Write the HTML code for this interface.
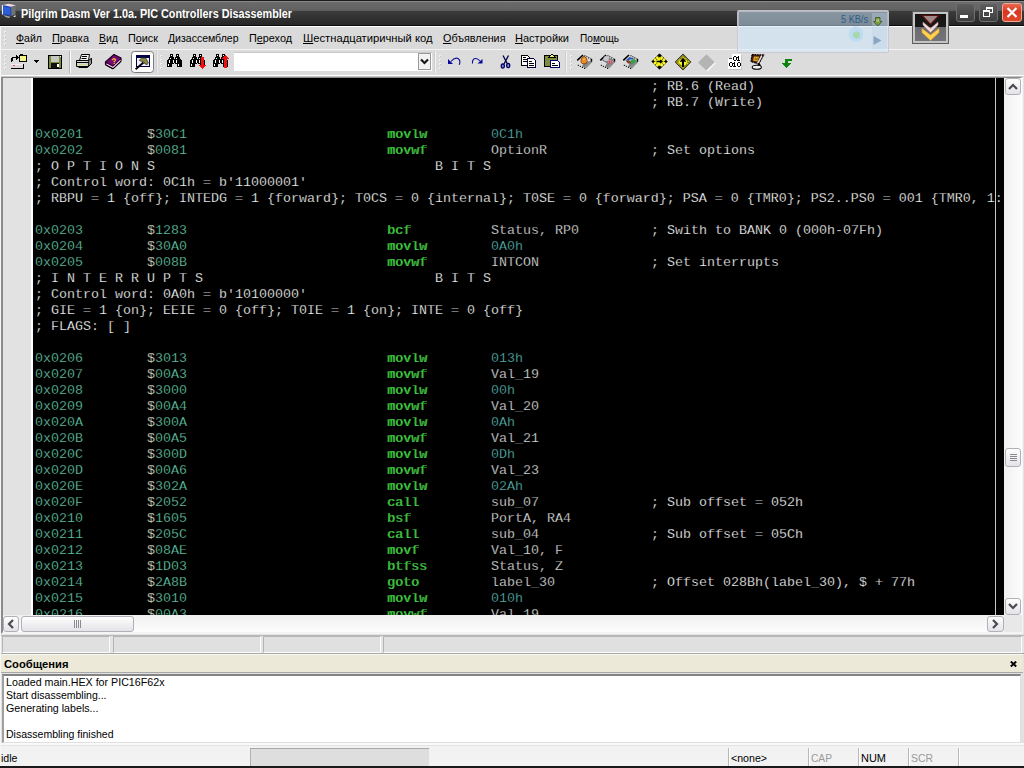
<!DOCTYPE html>
<html><head><meta charset="utf-8">
<style>
html,body{margin:0;padding:0;}
body{width:1024px;height:768px;overflow:hidden;position:relative;background:#e2e2e2;font-family:"Liberation Sans",sans-serif;font-size:11px;color:#000;}
div,span{position:absolute;box-sizing:border-box;}
#title{left:0;top:0;width:1024px;height:26px;background:linear-gradient(to bottom,#1a1a1a 0,#1a1a1a 1px,#888 1px,#888 2px,#6a6a6a 2px,#646464 9px,#585858 11px,#3c3c3c 11px,#262626 25px,#0a0a0a 25px,#0a0a0a 26px);}
#title .t{left:21px;top:5px;color:#fff;font-weight:bold;font-size:12.5px;white-space:nowrap;letter-spacing:0.1px;}
#menu{left:0;top:26px;width:1024px;height:23px;background:#dadada;border-top:1px solid #fff;}
#menu span{top:5px;font-size:11.5px;white-space:nowrap;}
#menu u{text-decoration:underline;}
#tb{left:0;top:49px;width:1024px;height:27px;background:#dcdcdc;border-top:1px solid #f4f4f4;border-bottom:1px solid #fff;}
.sep{top:4px;width:2px;height:20px;border-left:1px solid #a8a8a8;border-right:1px solid #fff;}
#ed{left:1px;top:76px;width:1022px;height:558px;border:2px solid #8a8a8a;border-right-color:#f4f4f4;border-bottom-color:#f4f4f4;background:#fff;}
#gut{left:0;top:0;width:28px;height:537px;background:#e2e2e2;}
#code{left:30px;top:0;width:971px;height:537px;background:#000;overflow:hidden;font-family:"Liberation Mono",monospace;font-size:13.333px;line-height:16px;}
#code span{white-space:pre;height:16px;-webkit-text-stroke:0.25px #000;}
#code .a{color:#66cdaa;}
#code .s{color:#f0f0d8;}
#code .m{color:#50f050;text-shadow:0.5px 0 0 #50f050;}
#code .n{color:#5ab8b4;}
#code .d{color:#e4e4e4;}
#code .c{color:#fff;}
#edge{left:962px;top:0;width:1px;height:537px;background:#c8c8c8;}
#vs{left:1001px;top:0;width:18px;height:537px;background:linear-gradient(to right,#f0f0f0,#fdfdfd);}
#hs{left:0;top:537px;width:1001px;height:17px;background:linear-gradient(#f0f0f0,#fdfdfd);}
.sbtn{width:17px;height:17px;border:1px solid #b0b0b8;border-radius:3px;background:linear-gradient(#fdfdfd,#e4e4e8);}
#panels{left:0;top:635px;width:1024px;height:19px;background:#e4e4e4;border-top:1px solid #b8b8b8;border-bottom:1px solid #a8a8a8;}
#panels div{top:0px;height:17px;border:1px solid #fcfcfc;border-top-color:#b4b4b4;border-left-color:#b4b4b4;background:#e0e0e0;}
#mh{left:0;top:654px;width:1023px;height:19px;background:#ece9d8;border-top:1px solid #f8f8f4;border-bottom:1px solid #a8a8a8;}
#mh .t{left:3px;top:3px;font-weight:bold;font-size:11.5px;}
#mb{left:2px;top:674px;width:1019px;height:69px;background:#fff;border:2px solid #848484;border-left-color:#a0a0a0;border-right:1px solid #e0e0e0;border-bottom:1px solid #e0e0e0;}
#mb span{left:3px;font-size:11px;white-space:nowrap;}
#sb{left:0;top:745px;width:1024px;height:21px;background:#f2f2f2;border-top:1px solid #e4e4e4;}
.ss{top:2px;width:2px;height:19px;border-left:1px solid #b8b8b8;border-right:1px solid #fff;}
#sb span{top:4px;font-size:11.5px;}
#bot{left:0;top:766px;width:1024px;height:2px;background:#1a1a1a;}
</style></head><body>
<div id="title"><svg style="position:absolute;left:0;top:0" width="20" height="22">
<path d="M2 5 L11 6.500 L11 16 L2 14.500Z" fill="#2448c8"/>
<path d="M4 7 L10 8 L10 14.500 L4 13.500Z" fill="#2c60d8"/>
<path d="M2.500 5 V14.500" stroke="#e8eefc" stroke-width="1.200"/>
<path d="M3 5 L8.500 3.800 L16 5.200 L11 6.800Z" fill="#f0dce4"/>
<path d="M11.300 7 L15.500 5.800 L15.500 14.500 L11.300 16Z" fill="#6c7474"/>
<path d="M3 15 L10.500 16.800 L9 18 L6 17.200Z" fill="#98a8a0"/>
<path d="M13 16.800 L15.500 15 L15.500 17 Z" fill="#f4f4f4"/>
</svg>
<span style="left:20.5px;top:7px;font-size:12px;font-weight:bold;color:#fff;white-space:pre;transform-origin:0 0;transform:scaleX(0.9009)">Pilgrim Dasm Ver 1.0a. PIC Controllers Disassembler</span></div>
<div id="menu">
<svg style="position:absolute;left:0;top:0" width="10" height="23" shape-rendering="crispEdges"><g fill="#f4f4f4"><rect x="4" y="4" width="2" height="2"/><rect x="4" y="8" width="2" height="2"/><rect x="4" y="12" width="2" height="2"/><rect x="4" y="16" width="2" height="2"/></g><g fill="#c4c4c4"><rect x="5" y="5" width="1" height="1"/><rect x="5" y="9" width="1" height="1"/><rect x="5" y="13" width="1" height="1"/><rect x="5" y="17" width="1" height="1"/></g></svg>
<span style="left:15.5px;top:5px;font-size:11px;font-weight:normal;color:#000;white-space:pre;transform-origin:0 0;transform:scaleX(0.9613)"><u>Ф</u>айл</span>
<span style="left:51.5px;top:5px;font-size:11px;font-weight:normal;color:#000;white-space:pre;transform-origin:0 0;transform:scaleX(0.9954)"><u>П</u>равка</span>
<span style="left:98.5px;top:5px;font-size:11px;font-weight:normal;color:#000;white-space:pre;transform-origin:0 0;transform:scaleX(0.9545)"><u>В</u>ид</span>
<span style="left:127.5px;top:5px;font-size:11px;font-weight:normal;color:#000;white-space:pre;transform-origin:0 0;transform:scaleX(0.9841)">П<u>о</u>иск</span>
<span style="left:168px;top:5px;font-size:11px;font-weight:normal;color:#000;white-space:pre;transform-origin:0 0;transform:scaleX(0.9555)"><u>Д</u>изассемблер</span>
<span style="left:248.5px;top:5px;font-size:11px;font-weight:normal;color:#000;white-space:pre;transform-origin:0 0;transform:scaleX(0.9839)">П<u>е</u>реход</span>
<span style="left:302.5px;top:5px;font-size:11px;font-weight:normal;color:#000;white-space:pre;transform-origin:0 0;transform:scaleX(1.0187)"><u>Ш</u>естнадцатиричный код</span>
<span style="left:442.5px;top:5px;font-size:11px;font-weight:normal;color:#000;white-space:pre;transform-origin:0 0;transform:scaleX(0.9821)"><u>О</u>бъявления</span>
<span style="left:514.5px;top:5px;font-size:11px;font-weight:normal;color:#000;white-space:pre;transform-origin:0 0;transform:scaleX(1.0012)"><u>Н</u>астройки</span>
<span style="left:579.5px;top:5px;font-size:11px;font-weight:normal;color:#000;white-space:pre;transform-origin:0 0;transform:scaleX(0.9176)">По<u>м</u>ощь</span>
</div>
<div id="tb">
<svg style="position:absolute;left:0;top:-1px" width="1024" height="28" viewBox="0 49 1024 28" shape-rendering="crispEdges">
<!-- grips -->
<g fill="#f2f2f2">
<rect x="4" y="55" width="2" height="2"/><rect x="4" y="59" width="2" height="2"/><rect x="4" y="63" width="2" height="2"/><rect x="4" y="67" width="2" height="2"/>
<rect x="160" y="55" width="2" height="2"/><rect x="160" y="59" width="2" height="2"/><rect x="160" y="63" width="2" height="2"/><rect x="160" y="67" width="2" height="2"/>
<rect x="439" y="55" width="2" height="2"/><rect x="439" y="59" width="2" height="2"/><rect x="439" y="63" width="2" height="2"/><rect x="439" y="67" width="2" height="2"/>
<rect x="570" y="55" width="2" height="2"/><rect x="570" y="59" width="2" height="2"/><rect x="570" y="63" width="2" height="2"/><rect x="570" y="67" width="2" height="2"/>
</g>
<g fill="#c4c4c4">
<rect x="5" y="56" width="1" height="1"/><rect x="5" y="60" width="1" height="1"/><rect x="5" y="64" width="1" height="1"/><rect x="5" y="68" width="1" height="1"/>
<rect x="161" y="56" width="1" height="1"/><rect x="161" y="60" width="1" height="1"/><rect x="161" y="64" width="1" height="1"/><rect x="161" y="68" width="1" height="1"/>
<rect x="440" y="56" width="1" height="1"/><rect x="440" y="60" width="1" height="1"/><rect x="440" y="64" width="1" height="1"/><rect x="440" y="68" width="1" height="1"/>
<rect x="571" y="56" width="1" height="1"/><rect x="571" y="60" width="1" height="1"/><rect x="571" y="64" width="1" height="1"/><rect x="571" y="68" width="1" height="1"/>
</g>
<!-- separators -->
<rect x="69" y="51" width="1" height="22" fill="#b4b4b4"/><rect x="70" y="51" width="1" height="22" fill="#fff"/>
<rect x="156" y="51" width="1" height="22" fill="#d0d0d0"/><rect x="157" y="51" width="1" height="22" fill="#ececec"/>
<rect x="434" y="51" width="1" height="22" fill="#cccccc"/><rect x="435" y="51" width="1" height="22" fill="#f4f4f4"/>
<rect x="565" y="51" width="1" height="22" fill="#cccccc"/><rect x="566" y="51" width="1" height="22" fill="#f4f4f4"/>
<!-- open icon -->
<path d="M11 62V58h1v-1h4v-2h1v1h1v1h1v1h-1v1h-1v1h-1v-2h-3v3z" fill="#000"/>
<rect x="19" y="55" width="8" height="7" fill="#000"/><rect x="20" y="54" width="3" height="1" fill="#000"/>
<rect x="20" y="56" width="6" height="5" fill="#f4f488"/>
<rect x="11" y="64" width="13" height="5" fill="#000"/><rect x="11" y="64" width="12" height="4" fill="#dcd4d8"/><rect x="11" y="64" width="12" height="1" fill="#f8f0f0"/><rect x="13" y="65" width="2" height="1" fill="#e05070"/>
<!-- drop arrow -->
<path d="M34 60h5v1h-1v1h-1v1h-1v-1h-1v-1h-1z" fill="#000"/>
<!-- floppy -->
<rect x="48" y="55" width="14" height="14" fill="#000"/>
<rect x="49" y="56" width="12" height="12" fill="#7d8c3c"/>
<rect x="51" y="56" width="8" height="6" fill="#c4c8c0"/>
<rect x="51" y="63" width="8" height="5" fill="#101010"/>
<rect x="57" y="64" width="2" height="3" fill="#fff"/>
<rect x="60" y="56" width="1" height="1" fill="#fff"/>
<!-- printer -->
<g shape-rendering="auto">
<path d="M79.500 60.500 L81.500 54.500 H89.500 L88.500 60.500" fill="#f4f4f4" stroke="#000"/>
<path d="M82 56.500h5M81.500 58.500h5" stroke="#000"/>
<path d="M76.500 60.500H88.500L91.500 58.500V63.500L88.500 66.500H76.500Z" fill="#d8d8d8" stroke="#000"/>
<path d="M88.500 60.500 L91.500 58.500 V63.500 L88.500 66.500Z" fill="#888" stroke="#000" stroke-width="0.800"/>
<path d="M76.500 62.500H88.500" stroke="#000"/>
<path d="M77 64.500H88" stroke="#d4d48c"/>
<path d="M78.500 67.500H87.500L90.500 64.500" stroke="#000" fill="none"/>
</g>
<!-- help book -->
<g shape-rendering="auto">
<path d="M105.500 62 L114 54.500 L121 58 L121 61 L113 68.500 L105.500 64.500Z" fill="#760876" stroke="#1c001c" stroke-width="1.200" stroke-linejoin="round"/>
<path d="M106.500 64 L113 67.300 L120.500 60.300" stroke="#e8d8ec" stroke-width="1.100" fill="none"/>
<path d="M105.500 62 L113 66 L121 58" stroke="#30002c" stroke-width="1" fill="none"/>
<path d="M105.500 65 L113 69 L121 61.500" stroke="#000" stroke-width="1" fill="none"/>
<text x="111.500" y="64" font-family="Liberation Sans" font-weight="bold" font-size="8" fill="#ffd020" transform="rotate(-8 114 61)">?</text>
</g>
<!-- pressed button -->
<rect x="131.500" y="51.500" width="22" height="21" rx="3" ry="3" fill="#fff" stroke="#7c7c7c" shape-rendering="auto"/>
<rect x="136" y="55" width="14" height="12" fill="#000048"/>
<rect x="137" y="58" width="12" height="8" fill="#f0f0fc"/>
<g shape-rendering="auto">
<path d="M139.300 60.300 L141.800 57.900 L145.600 58 L148.300 62.500 L147.200 64.600 L145 64 L143.600 61.600 L141 61.200Z" fill="#8c8c44" stroke="#2c2c10" stroke-width="0.700"/>
<path d="M143.500 62.500 L135.600 69.200" stroke="#000" stroke-width="1.900"/>
</g>
<!-- binoculars x3 -->
<rect x="170" y="54" width="3" height="1" fill="#000"/><rect x="176" y="54" width="3" height="1" fill="#000"/><rect x="170" y="55" width="1" height="1" fill="#000"/><rect x="171" y="55" width="1" height="1" fill="#fff"/><rect x="172" y="55" width="1" height="1" fill="#000"/><rect x="176" y="55" width="1" height="1" fill="#000"/><rect x="177" y="55" width="1" height="1" fill="#fff"/><rect x="178" y="55" width="1" height="1" fill="#000"/><rect x="170" y="56" width="3" height="1" fill="#000"/><rect x="176" y="56" width="3" height="1" fill="#000"/><rect x="169" y="57" width="5" height="1" fill="#000"/><rect x="175" y="57" width="5" height="1" fill="#000"/><rect x="169" y="58" width="1" height="1" fill="#000"/><rect x="170" y="58" width="1" height="1" fill="#fff"/><rect x="171" y="58" width="3" height="1" fill="#000"/><rect x="175" y="58" width="1" height="1" fill="#000"/><rect x="176" y="58" width="1" height="1" fill="#fff"/><rect x="177" y="58" width="3" height="1" fill="#000"/><rect x="168" y="59" width="13" height="1" fill="#000"/><rect x="167" y="60" width="2" height="1" fill="#000"/><rect x="169" y="60" width="1" height="1" fill="#fff"/><rect x="170" y="60" width="3" height="1" fill="#000"/><rect x="173" y="60" width="1" height="1" fill="#fff"/><rect x="174" y="60" width="2" height="1" fill="#000"/><rect x="176" y="60" width="1" height="1" fill="#fff"/><rect x="177" y="60" width="5" height="1" fill="#000"/><rect x="167" y="61" width="2" height="1" fill="#000"/><rect x="169" y="61" width="1" height="1" fill="#fff"/><rect x="170" y="61" width="3" height="1" fill="#000"/><rect x="173" y="61" width="1" height="1" fill="#fff"/><rect x="174" y="61" width="2" height="1" fill="#000"/><rect x="176" y="61" width="1" height="1" fill="#fff"/><rect x="177" y="61" width="5" height="1" fill="#000"/><rect x="167" y="62" width="2" height="1" fill="#000"/><rect x="169" y="62" width="1" height="1" fill="#fff"/><rect x="170" y="62" width="3" height="1" fill="#000"/><rect x="173" y="62" width="1" height="1" fill="#fff"/><rect x="174" y="62" width="2" height="1" fill="#000"/><rect x="176" y="62" width="1" height="1" fill="#fff"/><rect x="177" y="62" width="5" height="1" fill="#000"/><rect x="167" y="63" width="7" height="1" fill="#000"/><rect x="175" y="63" width="7" height="1" fill="#000"/><rect x="167" y="64" width="1" height="1" fill="#000"/><rect x="168" y="64" width="1" height="1" fill="#fff"/><rect x="169" y="64" width="3" height="1" fill="#000"/><rect x="177" y="64" width="1" height="1" fill="#000"/><rect x="178" y="64" width="1" height="1" fill="#fff"/><rect x="179" y="64" width="3" height="1" fill="#000"/><rect x="167" y="65" width="1" height="1" fill="#000"/><rect x="168" y="65" width="1" height="1" fill="#fff"/><rect x="169" y="65" width="3" height="1" fill="#000"/><rect x="177" y="65" width="1" height="1" fill="#000"/><rect x="178" y="65" width="1" height="1" fill="#fff"/><rect x="179" y="65" width="3" height="1" fill="#000"/><rect x="167" y="66" width="5" height="1" fill="#000"/><rect x="177" y="66" width="5" height="1" fill="#000"/><rect x="193" y="54" width="3" height="1" fill="#000"/><rect x="199" y="54" width="3" height="1" fill="#000"/><rect x="193" y="55" width="1" height="1" fill="#000"/><rect x="194" y="55" width="1" height="1" fill="#fff"/><rect x="195" y="55" width="1" height="1" fill="#000"/><rect x="199" y="55" width="1" height="1" fill="#000"/><rect x="200" y="55" width="1" height="1" fill="#fff"/><rect x="201" y="55" width="1" height="1" fill="#000"/><rect x="193" y="56" width="3" height="1" fill="#000"/><rect x="199" y="56" width="3" height="1" fill="#000"/><rect x="192" y="57" width="5" height="1" fill="#000"/><rect x="198" y="57" width="5" height="1" fill="#000"/><rect x="192" y="58" width="1" height="1" fill="#000"/><rect x="193" y="58" width="1" height="1" fill="#fff"/><rect x="194" y="58" width="3" height="1" fill="#000"/><rect x="198" y="58" width="1" height="1" fill="#000"/><rect x="199" y="58" width="1" height="1" fill="#fff"/><rect x="200" y="58" width="3" height="1" fill="#000"/><rect x="191" y="59" width="13" height="1" fill="#000"/><rect x="190" y="60" width="2" height="1" fill="#000"/><rect x="192" y="60" width="1" height="1" fill="#fff"/><rect x="193" y="60" width="3" height="1" fill="#000"/><rect x="196" y="60" width="1" height="1" fill="#fff"/><rect x="197" y="60" width="2" height="1" fill="#000"/><rect x="199" y="60" width="1" height="1" fill="#fff"/><rect x="200" y="60" width="5" height="1" fill="#000"/><rect x="190" y="61" width="2" height="1" fill="#000"/><rect x="192" y="61" width="1" height="1" fill="#fff"/><rect x="193" y="61" width="3" height="1" fill="#000"/><rect x="196" y="61" width="1" height="1" fill="#fff"/><rect x="197" y="61" width="2" height="1" fill="#000"/><rect x="199" y="61" width="1" height="1" fill="#fff"/><rect x="200" y="61" width="5" height="1" fill="#000"/><rect x="190" y="62" width="2" height="1" fill="#000"/><rect x="192" y="62" width="1" height="1" fill="#fff"/><rect x="193" y="62" width="3" height="1" fill="#000"/><rect x="196" y="62" width="1" height="1" fill="#fff"/><rect x="197" y="62" width="2" height="1" fill="#000"/><rect x="199" y="62" width="1" height="1" fill="#fff"/><rect x="200" y="62" width="5" height="1" fill="#000"/><rect x="190" y="63" width="7" height="1" fill="#000"/><rect x="198" y="63" width="7" height="1" fill="#000"/><rect x="190" y="64" width="1" height="1" fill="#000"/><rect x="191" y="64" width="1" height="1" fill="#fff"/><rect x="192" y="64" width="3" height="1" fill="#000"/><rect x="200" y="64" width="1" height="1" fill="#000"/><rect x="201" y="64" width="1" height="1" fill="#fff"/><rect x="202" y="64" width="3" height="1" fill="#000"/><rect x="190" y="65" width="1" height="1" fill="#000"/><rect x="191" y="65" width="1" height="1" fill="#fff"/><rect x="192" y="65" width="3" height="1" fill="#000"/><rect x="200" y="65" width="1" height="1" fill="#000"/><rect x="201" y="65" width="1" height="1" fill="#fff"/><rect x="202" y="65" width="3" height="1" fill="#000"/><rect x="190" y="66" width="5" height="1" fill="#000"/><rect x="200" y="66" width="5" height="1" fill="#000"/><rect x="216" y="54" width="3" height="1" fill="#000"/><rect x="222" y="54" width="3" height="1" fill="#000"/><rect x="216" y="55" width="1" height="1" fill="#000"/><rect x="217" y="55" width="1" height="1" fill="#fff"/><rect x="218" y="55" width="1" height="1" fill="#000"/><rect x="222" y="55" width="1" height="1" fill="#000"/><rect x="223" y="55" width="1" height="1" fill="#fff"/><rect x="224" y="55" width="1" height="1" fill="#000"/><rect x="216" y="56" width="3" height="1" fill="#000"/><rect x="222" y="56" width="3" height="1" fill="#000"/><rect x="215" y="57" width="5" height="1" fill="#000"/><rect x="221" y="57" width="5" height="1" fill="#000"/><rect x="215" y="58" width="1" height="1" fill="#000"/><rect x="216" y="58" width="1" height="1" fill="#fff"/><rect x="217" y="58" width="3" height="1" fill="#000"/><rect x="221" y="58" width="1" height="1" fill="#000"/><rect x="222" y="58" width="1" height="1" fill="#fff"/><rect x="223" y="58" width="3" height="1" fill="#000"/><rect x="214" y="59" width="13" height="1" fill="#000"/><rect x="213" y="60" width="2" height="1" fill="#000"/><rect x="215" y="60" width="1" height="1" fill="#fff"/><rect x="216" y="60" width="3" height="1" fill="#000"/><rect x="219" y="60" width="1" height="1" fill="#fff"/><rect x="220" y="60" width="2" height="1" fill="#000"/><rect x="222" y="60" width="1" height="1" fill="#fff"/><rect x="223" y="60" width="5" height="1" fill="#000"/><rect x="213" y="61" width="2" height="1" fill="#000"/><rect x="215" y="61" width="1" height="1" fill="#fff"/><rect x="216" y="61" width="3" height="1" fill="#000"/><rect x="219" y="61" width="1" height="1" fill="#fff"/><rect x="220" y="61" width="2" height="1" fill="#000"/><rect x="222" y="61" width="1" height="1" fill="#fff"/><rect x="223" y="61" width="5" height="1" fill="#000"/><rect x="213" y="62" width="2" height="1" fill="#000"/><rect x="215" y="62" width="1" height="1" fill="#fff"/><rect x="216" y="62" width="3" height="1" fill="#000"/><rect x="219" y="62" width="1" height="1" fill="#fff"/><rect x="220" y="62" width="2" height="1" fill="#000"/><rect x="222" y="62" width="1" height="1" fill="#fff"/><rect x="223" y="62" width="5" height="1" fill="#000"/><rect x="213" y="63" width="7" height="1" fill="#000"/><rect x="221" y="63" width="7" height="1" fill="#000"/><rect x="213" y="64" width="1" height="1" fill="#000"/><rect x="214" y="64" width="1" height="1" fill="#fff"/><rect x="215" y="64" width="3" height="1" fill="#000"/><rect x="223" y="64" width="1" height="1" fill="#000"/><rect x="224" y="64" width="1" height="1" fill="#fff"/><rect x="225" y="64" width="3" height="1" fill="#000"/><rect x="213" y="65" width="1" height="1" fill="#000"/><rect x="214" y="65" width="1" height="1" fill="#fff"/><rect x="215" y="65" width="3" height="1" fill="#000"/><rect x="223" y="65" width="1" height="1" fill="#000"/><rect x="224" y="65" width="1" height="1" fill="#fff"/><rect x="225" y="65" width="3" height="1" fill="#000"/><rect x="213" y="66" width="5" height="1" fill="#000"/><rect x="223" y="66" width="5" height="1" fill="#000"/><rect x="201" y="57" width="3" height="1" fill="#f01010"/><rect x="201" y="58" width="3" height="1" fill="#f01010"/><rect x="201" y="59" width="3" height="1" fill="#f01010"/><rect x="201" y="60" width="3" height="1" fill="#f01010"/><rect x="201" y="61" width="3" height="1" fill="#f01010"/><rect x="201" y="62" width="3" height="1" fill="#f01010"/><rect x="201" y="63" width="3" height="1" fill="#f01010"/><rect x="201" y="64" width="3" height="1" fill="#f01010"/><rect x="199" y="65" width="7" height="1" fill="#f01010"/><rect x="200" y="66" width="5" height="1" fill="#f01010"/><rect x="201" y="67" width="3" height="1" fill="#f01010"/><rect x="202" y="68" width="1" height="1" fill="#f01010"/><rect x="225" y="55" width="1" height="1" fill="#f01010"/><rect x="224" y="56" width="3" height="1" fill="#f01010"/><rect x="223" y="57" width="5" height="1" fill="#f01010"/><rect x="222" y="58" width="7" height="1" fill="#f01010"/><rect x="224" y="59" width="3" height="1" fill="#f01010"/><rect x="224" y="60" width="3" height="1" fill="#f01010"/><rect x="224" y="61" width="3" height="1" fill="#f01010"/><rect x="224" y="62" width="3" height="1" fill="#f01010"/><rect x="224" y="63" width="3" height="1" fill="#f01010"/><rect x="224" y="64" width="3" height="1" fill="#f01010"/><rect x="224" y="65" width="3" height="1" fill="#f01010"/><rect x="224" y="66" width="3" height="1" fill="#f01010"/><rect x="224" y="67" width="3" height="1" fill="#f01010"/>
<!-- combobox -->
<rect x="234" y="52" width="198" height="19" fill="#fff"/>
<rect x="234" y="52" width="198" height="1" fill="#c8c8c8"/>
<rect x="418.500" y="53.500" width="12" height="16" fill="#f2f2f2" stroke="#9a9a9a" shape-rendering="auto"/>
<path d="M421 59.500 L424.500 63 L428 59.500" stroke="#1a1a1a" stroke-width="2.200" fill="none" shape-rendering="auto"/>
<!-- undo -->
<g shape-rendering="auto">
<path d="M448 59v5h5z" fill="#0a0a9a"/>
<path d="M451 61.500 Q454.500 57 458 58.500 Q461 60.500 459.300 64.800" stroke="#0a0a9a" stroke-width="1.100" fill="none"/>
<!-- redo -->
<path d="M482.500 59v4.500h-5z" fill="#0a0a9a"/>
<path d="M472.500 63.500 Q472 59.500 475 58.500 Q477.500 58 480 61" stroke="#0a0a9a" stroke-width="1.100" fill="none"/>
<!-- scissors -->
<path d="M503 55.500 L507.500 64 M508.500 55.500 L504 64" stroke="#000040" stroke-width="1.300"/>
<ellipse cx="502.800" cy="66" rx="1.600" ry="2.200" fill="#8080d0" stroke="#000060" stroke-width="1.200"/>
<ellipse cx="508.200" cy="65.500" rx="1.600" ry="2.200" fill="#8080d0" stroke="#000060" stroke-width="1.200"/>
</g>
<!-- copy -->
<path d="M521 55h6l2 2v8h-8z" fill="#fff" stroke="#000" stroke-width="1" transform="translate(0.500,0.500)"/>
<rect x="523" y="57" width="3" height="1" fill="#000"/><rect x="523" y="59" width="4" height="1" fill="#000"/><rect x="523" y="61" width="4" height="1" fill="#000"/>
<path d="M527 58h6l2 2v7h-8z" fill="#fff" stroke="#000040" stroke-width="1" transform="translate(0.500,0.500)"/>
<rect x="529" y="61" width="3" height="1" fill="#000"/><rect x="529" y="63" width="5" height="1" fill="#000"/><rect x="529" y="65" width="5" height="1" fill="#000"/>
<!-- paste -->
<rect x="544" y="55" width="14" height="12" rx="1" fill="#000"/>
<rect x="545" y="56" width="12" height="10" fill="#7d8c3c"/>
<path d="M548 58h8v-1h-1v-1h-1v-1h-1v-1h-2v1h-1v1h-1v1h-1z" fill="#000"/>
<rect x="550" y="56" width="4" height="1" fill="#f0f080"/><rect x="551" y="55" width="2" height="1" fill="#f0f080"/>
<path d="M550 60h7l2 2v5h-9z" fill="#fff" stroke="#000070" stroke-width="1" transform="translate(0.500,0.500)"/>
<rect x="552" y="63" width="3" height="1" fill="#000"/><rect x="552" y="65" width="6" height="1" fill="#000"/>
<!-- chips -->
<g shape-rendering="auto" id="chips">
<defs><linearGradient id="cg" x1="0" y1="0" x2="1" y2="1"><stop offset="0" stop-color="#586068"/><stop offset="1" stop-color="#b4b4b4"/></linearGradient></defs>
<g>
<path d="M584 63 L591.500 60.500 L592.300 62 L586 68.800 L582 66.500Z" fill="url(#cg)"/>
<path d="M577.300 60.400 L583 55" stroke="#000" stroke-width="1.600" fill="none"/>
<path d="M584.500 55.600 L591 59" stroke="#000" stroke-width="1.200" stroke-dasharray="1 1.200" fill="none"/>
<path d="M591.500 58.800 V61.600" stroke="#000" stroke-width="1.400"/>
<rect x="577.800" y="64.800" width="1.100" height="1.100" fill="#000"/><rect x="579.800" y="65.800" width="1.100" height="1.100" fill="#000"/><rect x="581.900" y="66.800" width="1.100" height="1.100" fill="#000"/><rect x="584" y="67.800" width="1.100" height="1.100" fill="#000"/>
<path d="M584 56 Q587.600 58.500 587.200 61.500 Q586.500 64 584 64 Q581.300 64 580.900 61.500 Q580.700 58.500 584 56Z" fill="#f08c20" stroke="#6a2c00" stroke-width="0.700"/>
<path d="M583 60 Q584 58 585 59.500" stroke="#ffc070" stroke-width="1" fill="none"/>
</g>
<g transform="translate(23,0)">
<path d="M584 63 L591.500 60.500 L592.300 62 L586 68.800 L582 66.500Z" fill="url(#cg)"/>
<path d="M577.300 60.400 L583 55" stroke="#000" stroke-width="1.600" fill="none"/>
<path d="M584.500 55.600 L591 59" stroke="#000" stroke-width="1.200" stroke-dasharray="1 1.200" fill="none"/>
<path d="M591.500 58.800 V61.600" stroke="#000" stroke-width="1.400"/>
<rect x="577.800" y="64.800" width="1.100" height="1.100" fill="#000"/><rect x="579.800" y="65.800" width="1.100" height="1.100" fill="#000"/><rect x="581.900" y="66.800" width="1.100" height="1.100" fill="#000"/><rect x="584" y="67.800" width="1.100" height="1.100" fill="#000"/>
<path d="M579 60.500 L584 57 L591 60 L586.500 64.500Z" fill="#707478"/>
<circle cx="583.200" cy="58.600" r="2.700" fill="#c4c8cc"/>
<path d="M585.500 59.500 L590 61 L588 65 L584.500 63Z" fill="#e8b0b8"/>
<path d="M585 61 L589.500 62.800 M584.800 62.500 L588.600 64.200 M587 60 L586 64 M588.800 60.600 L587.600 64.800" stroke="#a03040" stroke-width="0.600"/>
</g>
<g transform="translate(46,0)">
<path d="M584 63 L591.500 60.500 L592.300 62 L586 68.800 L582 66.500Z" fill="url(#cg)"/>
<path d="M577.300 60.400 L583 55" stroke="#000" stroke-width="1.600" fill="none"/>
<path d="M584.500 55.600 L591 59" stroke="#000" stroke-width="1.200" stroke-dasharray="1 1.200" fill="none"/>
<path d="M591.500 58.800 V61.600" stroke="#000" stroke-width="1.400"/>
<rect x="577.800" y="64.800" width="1.100" height="1.100" fill="#000"/><rect x="579.800" y="65.800" width="1.100" height="1.100" fill="#000"/><rect x="581.900" y="66.800" width="1.100" height="1.100" fill="#000"/><rect x="584" y="67.800" width="1.100" height="1.100" fill="#000"/>
<path d="M579.500 60.500 L583.500 57 L588 58.500 L584 61Z" fill="#3454b4"/>
<path d="M584 61 L588 58.500 L590.500 61 L586.500 64.500Z" fill="#38a048"/>
<path d="M579.500 60.500 L584 61 L585.500 63.500 L582 63.500Z" fill="#80401c"/>
<path d="M583 60.500 L585.500 59.500" stroke="#e0e8ff" stroke-width="0.800"/>
</g>
</g>
<!-- diamonds -->
<g shape-rendering="auto">
<path d="M659.500 53.800 L667.200 61.500 L659.500 69.200 L651.800 61.500Z" fill="#000" stroke="#000" stroke-width="0.800" stroke-linejoin="round"/>
<path d="M659.500 57 L664 61.500 L659.500 66 L655 61.500Z" fill="#f8f428"/>
<g fill="#f8f428"><circle cx="657.300" cy="57.800" r="1.450"/><circle cx="661.700" cy="57.800" r="1.450"/><circle cx="657.300" cy="65.200" r="1.450"/><circle cx="661.700" cy="65.200" r="1.450"/>
<circle cx="655" cy="59.800" r="1.450"/><circle cx="655" cy="63.200" r="1.450"/><circle cx="664" cy="59.800" r="1.450"/><circle cx="664" cy="63.200" r="1.450"/></g>
<path d="M656.500 61.500H661 M660 60 L662 61.500 L660 63" stroke="#000" stroke-width="1.300" fill="none"/>
<path d="M683 53.800 L691.200 62 L683 70.200 L674.800 62Z" fill="#000"/>
<path d="M683 54.900 L690.100 62 L683 69.100 L675.900 62Z" fill="#f8f428"/>
<path d="M683 56.400 L688.600 62 L683 67.600 L677.400 62Z" fill="none" stroke="#000" stroke-width="1" stroke-dasharray="1.300 0.700"/>
<path d="M683 67V60" stroke="#000" stroke-width="2"/><path d="M679.600 61.800 L683 57.600 L686.400 61.800Z" fill="#000"/>
<path d="M706.500 54.300 L715 62.500 L706.500 70.700 L698 62.500Z" fill="#b4b4b4"/>
<path d="M715.300 62.800 L706.800 71" stroke="#fff" stroke-width="1.200"/>
</g>
<!-- 01 010 -->
<rect x="728" y="54" width="13" height="15" fill="#fff"/>
<rect x="729" y="69" width="13" height="1" fill="#c0c0c0"/><rect x="741" y="55" width="1" height="14" fill="#c8c8c8"/>
<rect x="728" y="54" width="4" height="4" fill="#dcdcdc"/><rect x="729" y="58" width="3" height="1" fill="#404040"/>
<rect x="734" y="56" width="2" height="1" fill="#000"/><rect x="733" y="57" width="1" height="1" fill="#000"/><rect x="736" y="57" width="1" height="1" fill="#000"/><rect x="733" y="58" width="1" height="1" fill="#000"/><rect x="736" y="58" width="1" height="1" fill="#000"/><rect x="733" y="59" width="1" height="1" fill="#000"/><rect x="736" y="59" width="1" height="1" fill="#000"/><rect x="734" y="60" width="2" height="1" fill="#000"/><rect x="738" y="56" width="1" height="1" fill="#000"/><rect x="737" y="57" width="2" height="1" fill="#000"/><rect x="738" y="58" width="1" height="1" fill="#000"/><rect x="738" y="59" width="1" height="1" fill="#000"/><rect x="737" y="60" width="3" height="1" fill="#000"/><rect x="730" y="62" width="2" height="1" fill="#000"/><rect x="729" y="63" width="1" height="1" fill="#000"/><rect x="732" y="63" width="1" height="1" fill="#000"/><rect x="729" y="64" width="1" height="1" fill="#000"/><rect x="732" y="64" width="1" height="1" fill="#000"/><rect x="729" y="65" width="1" height="1" fill="#000"/><rect x="732" y="65" width="1" height="1" fill="#000"/><rect x="730" y="66" width="2" height="1" fill="#000"/><rect x="734" y="62" width="1" height="1" fill="#000"/><rect x="733" y="63" width="2" height="1" fill="#000"/><rect x="734" y="64" width="1" height="1" fill="#000"/><rect x="734" y="65" width="1" height="1" fill="#000"/><rect x="733" y="66" width="3" height="1" fill="#000"/><rect x="738" y="62" width="2" height="1" fill="#000"/><rect x="737" y="63" width="1" height="1" fill="#000"/><rect x="740" y="63" width="1" height="1" fill="#000"/><rect x="737" y="64" width="1" height="1" fill="#000"/><rect x="740" y="64" width="1" height="1" fill="#000"/><rect x="737" y="65" width="1" height="1" fill="#000"/><rect x="740" y="65" width="1" height="1" fill="#000"/><rect x="738" y="66" width="2" height="1" fill="#000"/>
<!-- monitor -->
<g shape-rendering="auto">
<path d="M752 54.600 L763.600 55 L758.800 64 L751 61.600Z" fill="#4c1c14" stroke="#000" stroke-width="1.200" stroke-dasharray="1.800 0.700"/>
<path d="M761.800 55.600 L757.600 63.600" stroke="#e4e4e4" stroke-width="1.500"/>
<path d="M754 56.500 L759 56.800 L757.600 61.500 L753 60.800Z" fill="#e4b020"/>
<path d="M755.300 57.500 L754.900 60.300 M757.500 57.800 L757 60.600 M755.100 59 L757.200 59.300" stroke="#7a4a00" stroke-width="0.700"/>
<path d="M758 63.500 L760.500 66" stroke="#000" stroke-width="1.800"/>
<ellipse cx="756.800" cy="67.200" rx="4.600" ry="2" fill="#f4f4f4" stroke="#000" stroke-width="1.100"/>
</g>
<!-- green arrow -->
<path d="M785 59h7v2h-4v2h3v1h-1v1h-1v1h-1v1h-1v1h-1v-1h-1v-1h-1v-1h-1v-1h-1v-1h3z" fill="#0c840c"/>
</svg>

</div>
<div id="ed">
<div id="gut"></div>
<div id="code">
<div style="left:5px;top:0;width:1px;height:1px"></div>
<div id="cw" style="left:2px;top:1px;width:1000px;height:560px">
<span class="c" style="left:616px;top:0px">; RB.6 (Read)</span>
<span class="c" style="left:616px;top:16px">; RB.7 (Write)</span>
<span class="a" style="left:0px;top:48px">0x0201</span>
<span class="s" style="left:112px;top:48px">$</span>
<span class="a" style="left:120px;top:48px">30C1</span>
<span class="m" style="left:352px;top:48px">movlw</span>
<span class="n" style="left:456px;top:48px">0C1h</span>
<span class="a" style="left:0px;top:64px">0x0202</span>
<span class="s" style="left:112px;top:64px">$</span>
<span class="a" style="left:120px;top:64px">0081</span>
<span class="m" style="left:352px;top:64px">movwf</span>
<span class="d" style="left:456px;top:64px">OptionR</span>
<span class="c" style="left:616px;top:64px">; Set options</span>
<span class="c" style="left:0px;top:80px">; O P T I O N S</span>
<span class="c" style="left:400px;top:80px">B I T S</span>
<span class="c" style="left:0px;top:96px">; Control word: 0C1h = b'11000001'</span>
<span class="c" style="left:0px;top:112px">; RBPU = 1 {off}; INTEDG = 1 {forward}; T0CS = 0 {internal}; T0SE = 0 {forward}; PSA = 0 {TMR0}; PS2..PS0 = 001 {TMR0, 1:</span>
<span class="a" style="left:0px;top:144px">0x0203</span>
<span class="s" style="left:112px;top:144px">$</span>
<span class="a" style="left:120px;top:144px">1283</span>
<span class="m" style="left:352px;top:144px">bcf</span>
<span class="d" style="left:456px;top:144px">Status, RP0</span>
<span class="c" style="left:616px;top:144px">; Swith to BANK 0 (000h-07Fh)</span>
<span class="a" style="left:0px;top:160px">0x0204</span>
<span class="s" style="left:112px;top:160px">$</span>
<span class="a" style="left:120px;top:160px">30A0</span>
<span class="m" style="left:352px;top:160px">movlw</span>
<span class="n" style="left:456px;top:160px">0A0h</span>
<span class="a" style="left:0px;top:176px">0x0205</span>
<span class="s" style="left:112px;top:176px">$</span>
<span class="a" style="left:120px;top:176px">008B</span>
<span class="m" style="left:352px;top:176px">movwf</span>
<span class="d" style="left:456px;top:176px">INTCON</span>
<span class="c" style="left:616px;top:176px">; Set interrupts</span>
<span class="c" style="left:0px;top:192px">; I N T E R R U P T S</span>
<span class="c" style="left:400px;top:192px">B I T S</span>
<span class="c" style="left:0px;top:208px">; Control word: 0A0h = b'10100000'</span>
<span class="c" style="left:0px;top:224px">; GIE = 1 {on}; EEIE = 0 {off}; T0IE = 1 {on}; INTE = 0 {off}</span>
<span class="c" style="left:0px;top:240px">; FLAGS: [ ]</span>
<span class="a" style="left:0px;top:272px">0x0206</span>
<span class="s" style="left:112px;top:272px">$</span>
<span class="a" style="left:120px;top:272px">3013</span>
<span class="m" style="left:352px;top:272px">movlw</span>
<span class="n" style="left:456px;top:272px">013h</span>
<span class="a" style="left:0px;top:288px">0x0207</span>
<span class="s" style="left:112px;top:288px">$</span>
<span class="a" style="left:120px;top:288px">00A3</span>
<span class="m" style="left:352px;top:288px">movwf</span>
<span class="d" style="left:456px;top:288px">Val_19</span>
<span class="a" style="left:0px;top:304px">0x0208</span>
<span class="s" style="left:112px;top:304px">$</span>
<span class="a" style="left:120px;top:304px">3000</span>
<span class="m" style="left:352px;top:304px">movlw</span>
<span class="n" style="left:456px;top:304px">00h</span>
<span class="a" style="left:0px;top:320px">0x0209</span>
<span class="s" style="left:112px;top:320px">$</span>
<span class="a" style="left:120px;top:320px">00A4</span>
<span class="m" style="left:352px;top:320px">movwf</span>
<span class="d" style="left:456px;top:320px">Val_20</span>
<span class="a" style="left:0px;top:336px">0x020A</span>
<span class="s" style="left:112px;top:336px">$</span>
<span class="a" style="left:120px;top:336px">300A</span>
<span class="m" style="left:352px;top:336px">movlw</span>
<span class="n" style="left:456px;top:336px">0Ah</span>
<span class="a" style="left:0px;top:352px">0x020B</span>
<span class="s" style="left:112px;top:352px">$</span>
<span class="a" style="left:120px;top:352px">00A5</span>
<span class="m" style="left:352px;top:352px">movwf</span>
<span class="d" style="left:456px;top:352px">Val_21</span>
<span class="a" style="left:0px;top:368px">0x020C</span>
<span class="s" style="left:112px;top:368px">$</span>
<span class="a" style="left:120px;top:368px">300D</span>
<span class="m" style="left:352px;top:368px">movlw</span>
<span class="n" style="left:456px;top:368px">0Dh</span>
<span class="a" style="left:0px;top:384px">0x020D</span>
<span class="s" style="left:112px;top:384px">$</span>
<span class="a" style="left:120px;top:384px">00A6</span>
<span class="m" style="left:352px;top:384px">movwf</span>
<span class="d" style="left:456px;top:384px">Val_23</span>
<span class="a" style="left:0px;top:400px">0x020E</span>
<span class="s" style="left:112px;top:400px">$</span>
<span class="a" style="left:120px;top:400px">302A</span>
<span class="m" style="left:352px;top:400px">movlw</span>
<span class="n" style="left:456px;top:400px">02Ah</span>
<span class="a" style="left:0px;top:416px">0x020F</span>
<span class="s" style="left:112px;top:416px">$</span>
<span class="a" style="left:120px;top:416px">2052</span>
<span class="m" style="left:352px;top:416px">call</span>
<span class="d" style="left:456px;top:416px">sub_07</span>
<span class="c" style="left:616px;top:416px">; Sub offset = 052h</span>
<span class="a" style="left:0px;top:432px">0x0210</span>
<span class="s" style="left:112px;top:432px">$</span>
<span class="a" style="left:120px;top:432px">1605</span>
<span class="m" style="left:352px;top:432px">bsf</span>
<span class="d" style="left:456px;top:432px">PortA, RA4</span>
<span class="a" style="left:0px;top:448px">0x0211</span>
<span class="s" style="left:112px;top:448px">$</span>
<span class="a" style="left:120px;top:448px">205C</span>
<span class="m" style="left:352px;top:448px">call</span>
<span class="d" style="left:456px;top:448px">sub_04</span>
<span class="c" style="left:616px;top:448px">; Sub offset = 05Ch</span>
<span class="a" style="left:0px;top:464px">0x0212</span>
<span class="s" style="left:112px;top:464px">$</span>
<span class="a" style="left:120px;top:464px">08AE</span>
<span class="m" style="left:352px;top:464px">movf</span>
<span class="d" style="left:456px;top:464px">Val_10, F</span>
<span class="a" style="left:0px;top:480px">0x0213</span>
<span class="s" style="left:112px;top:480px">$</span>
<span class="a" style="left:120px;top:480px">1D03</span>
<span class="m" style="left:352px;top:480px">btfss</span>
<span class="d" style="left:456px;top:480px">Status, Z</span>
<span class="a" style="left:0px;top:496px">0x0214</span>
<span class="s" style="left:112px;top:496px">$</span>
<span class="a" style="left:120px;top:496px">2A8B</span>
<span class="m" style="left:352px;top:496px">goto</span>
<span class="d" style="left:456px;top:496px">label_30</span>
<span class="c" style="left:616px;top:496px">; Offset 028Bh(label_30), $ + 77h</span>
<span class="a" style="left:0px;top:512px">0x0215</span>
<span class="s" style="left:112px;top:512px">$</span>
<span class="a" style="left:120px;top:512px">3010</span>
<span class="m" style="left:352px;top:512px">movlw</span>
<span class="n" style="left:456px;top:512px">010h</span>
<span class="a" style="left:0px;top:528px">0x0216</span>
<span class="s" style="left:112px;top:528px">$</span>
<span class="a" style="left:120px;top:528px">00A3</span>
<span class="m" style="left:352px;top:528px">movwf</span>
<span class="d" style="left:456px;top:528px">Val_19</span>
</div>
<div id="edge"></div>
</div>
<div id="vs">
<div class="sbtn" style="left:1px;top:0px;width:16px;height:17px"></div>
<div class="sbtn" style="left:1px;top:370px;width:16px;height:19px"></div>
<div class="sbtn" style="left:1px;top:520px;width:16px;height:17px"></div>
<svg style="position:absolute;left:0;top:0" width="18" height="537">
<path d="M5 11 L9 7 L13 11" stroke="#4a4a52" stroke-width="2.200" fill="none"/>
<path d="M5 526 L9 530 L13 526" stroke="#4a4a52" stroke-width="2.200" fill="none"/>
<path d="M6 376.500h7M6 378.500h7M6 380.500h7M6 382.500h7" stroke="#8a8a92" stroke-width="1"/>
</svg>
</div>
<div id="hs">
<div class="sbtn" style="left:0px;top:1px;width:16px;height:16px"></div>
<div class="sbtn" style="left:18px;top:1px;width:113px;height:16px"></div>
<div class="sbtn" style="left:984px;top:1px;width:17px;height:16px"></div>
<svg style="position:absolute;left:0;top:0" width="1001" height="18">
<path d="M10 5 L6 9 L10 13" stroke="#4a4a52" stroke-width="2.200" fill="none"/>
<path d="M990 5 L994 9 L990 13" stroke="#4a4a52" stroke-width="2.200" fill="none"/>
<path d="M71.500 5v8M73.500 5v8M75.500 5v8M77.500 5v8" stroke="#8a8a92" stroke-width="1"/>
</svg>
</div>
<div style="left:1001px;top:537px;width:18px;height:17px;background:#e8e8e8"></div>
</div>
<div id="panels">
<div style="left:2px;width:108px"></div>
<div style="left:113px;width:148px"></div>
<div style="left:263px;width:118px"></div>
<div style="left:383px;width:639px"></div>
</div>
<div id="mh"><span style="left:3.5px;top:3px;font-size:11px;font-weight:bold;color:#000;white-space:pre;transform-origin:0 0;transform:scaleX(1.0172)">Сообщения</span><svg style="position:absolute;left:1010px;top:6px" width="8" height="7"><path d="M0.800 0.500 L6.200 5.500 M6.200 0.500 L0.800 5.500" stroke="#000" stroke-width="1.900"/></svg></div>
<div id="mb">
<span style="left:2px;top:0px;font-size:11px;font-weight:normal;color:#000;white-space:pre;transform-origin:0 0;transform:scaleX(0.9708)">Loaded main.HEX for PIC16F62x</span>
<span style="left:2px;top:13px;font-size:11px;font-weight:normal;color:#000;white-space:pre;transform-origin:0 0;transform:scaleX(0.9557)">Start disassembling...</span>
<span style="left:2px;top:26px;font-size:11px;font-weight:normal;color:#000;white-space:pre;transform-origin:0 0;transform:scaleX(0.9697)">Generating labels...</span>
<span style="left:2px;top:52px;font-size:11px;font-weight:normal;color:#000;white-space:pre;transform-origin:0 0;transform:scaleX(0.9556)">Disassembling finished</span>
</div>
<div id="sb">
<span style="left:1px;top:6px;font-size:11px;font-weight:normal;color:#000;white-space:pre;transform-origin:0 0;transform:scaleX(0.9635)">idle</span>
<div style="left:250px;top:2px;width:179px;height:19px;background:#dedede;border-left:1px solid #b0b0b0;border-top:1px solid #a8a8a8"></div>
<div class="ss" style="left:728px"></div><div class="ss" style="left:808px"></div><div class="ss" style="left:858px"></div><div class="ss" style="left:908px"></div><div class="ss" style="left:958px"></div>
<span style="left:731px;top:6px;font-size:11px;font-weight:normal;color:#000;white-space:pre;transform-origin:0 0;transform:scaleX(0.9644)">&lt;none&gt;</span>
<span style="left:811px;top:6px;font-size:11px;font-weight:normal;color:#9a9a9a;white-space:pre;transform-origin:0 0;transform:scaleX(0.9282)">CAP</span>
<span style="left:861px;top:6px;font-size:11px;font-weight:normal;color:#000;white-space:pre;transform-origin:0 0;transform:scaleX(0.9975)">NUM</span>
<span style="left:911px;top:6px;font-size:11px;font-weight:normal;color:#9a9a9a;white-space:pre;transform-origin:0 0;transform:scaleX(0.9469)">SCR</span>
</div>
<div style="left:0;top:743px;width:1024px;height:2px;background:#fafafa"></div>
<div id="bot"></div>
<div style="left:0;top:26px;width:1px;height:740px;background:#f6f6f6"></div>
<div style="left:1px;top:76px;width:1021px;height:1px;background:#c4c4c4"></div>

<!-- window buttons -->
<div style="left:956px;top:3px;width:19px;height:19px;border:1px solid #6e6e6e;border-radius:3px;background:linear-gradient(#5e5e5e,#3e3e3e)"></div>
<div style="left:960px;top:15px;width:8px;height:3px;background:#fff"></div>
<div style="left:979px;top:3px;width:19px;height:19px;border:1px solid #6e6e6e;border-radius:3px;background:linear-gradient(#5e5e5e,#3e3e3e)"></div>
<div style="left:986px;top:7px;width:7px;height:6px;border:1px solid #fff;border-top-width:2px"></div>
<div style="left:983px;top:10px;width:7px;height:7px;border:1px solid #fff;border-top-width:2px;background:#4a4a4a"></div>
<div style="left:1002px;top:3px;width:20px;height:19px;border:1px solid #f0a898;border-radius:3px;background:linear-gradient(#e86850,#d83820 45%,#e04828)"></div>
<svg style="position:absolute;left:1002px;top:3px" width="20" height="19"><path d="M5.500 5 L14.500 14 M14.500 5 L5.500 14" stroke="#fff" stroke-width="2.200"/></svg>
<!-- network overlay -->
<div style="left:737px;top:10px;width:152px;height:43px;background:rgba(206,234,255,0.52);border:1px solid rgba(200,196,204,0.85);border-radius:2px"></div>
<div style="left:738px;top:11px;width:150px;height:41px;border:1px solid rgba(240,232,236,0.45)"></div>
<div style="left:872px;top:13px;width:15px;height:36px;background:rgba(190,208,228,0.35)"></div>
<span style="left:840.5px;top:13px;font-size:10.5px;font-weight:normal;color:#2c5c8c;white-space:pre;transform-origin:0 0;transform:scaleX(0.8727)">5 KB/s</span>
<svg style="position:absolute;left:846px;top:12px" width="44" height="38">
<circle cx="10" cy="22.500" r="8" fill="#c0daf0" stroke="#d4e6f6" stroke-width="1"/>
<circle cx="10.500" cy="23" r="3.600" fill="#a4d8b0"/>
<path d="M27.500 24 L35.500 28.500 L27.500 33Z" fill="#8ca4c4"/>
<path d="M29.500 5.500 h4.500 v4 h2 L31.800 14 L27.500 9.500 H29.500Z" fill="#7a9c3c" stroke="#3c5424" stroke-width="0.800"/>
<path d="M31 7v3M32.800 7v3" stroke="#dce8a8" stroke-width="0.700"/>
</svg>
<!-- dark arrows box -->
<div style="left:912px;top:11px;width:37px;height:33px;border:1px solid #5c5c5c;background:linear-gradient(#141414 0,#181818 15px,#6c6c70 15px,#74747a 100%)"></div>
<div style="left:913px;top:12px;width:35px;height:31px;border:2px solid #c4c4c4"></div>
<svg style="position:absolute;left:912px;top:11px" width="37" height="33">
<path d="M10 4.500 L27 4.500 L18.500 13.500Z" fill="#a08888" stroke="#5a1010" stroke-width="1.200"/>
<path d="M11 11 L18.500 17.500 L26 11 L26 14 L18.500 21.500 L11 14Z" fill="#f4dcdc" stroke="#c08888" stroke-width="0.600"/>
<path d="M10 17.500 L18.500 24 L27 17.500 L27 21.500 L18.500 29.500 L10 21.500Z" fill="#ffd24a" stroke="#e0a040" stroke-width="0.600"/>
</svg>
</body></html>
